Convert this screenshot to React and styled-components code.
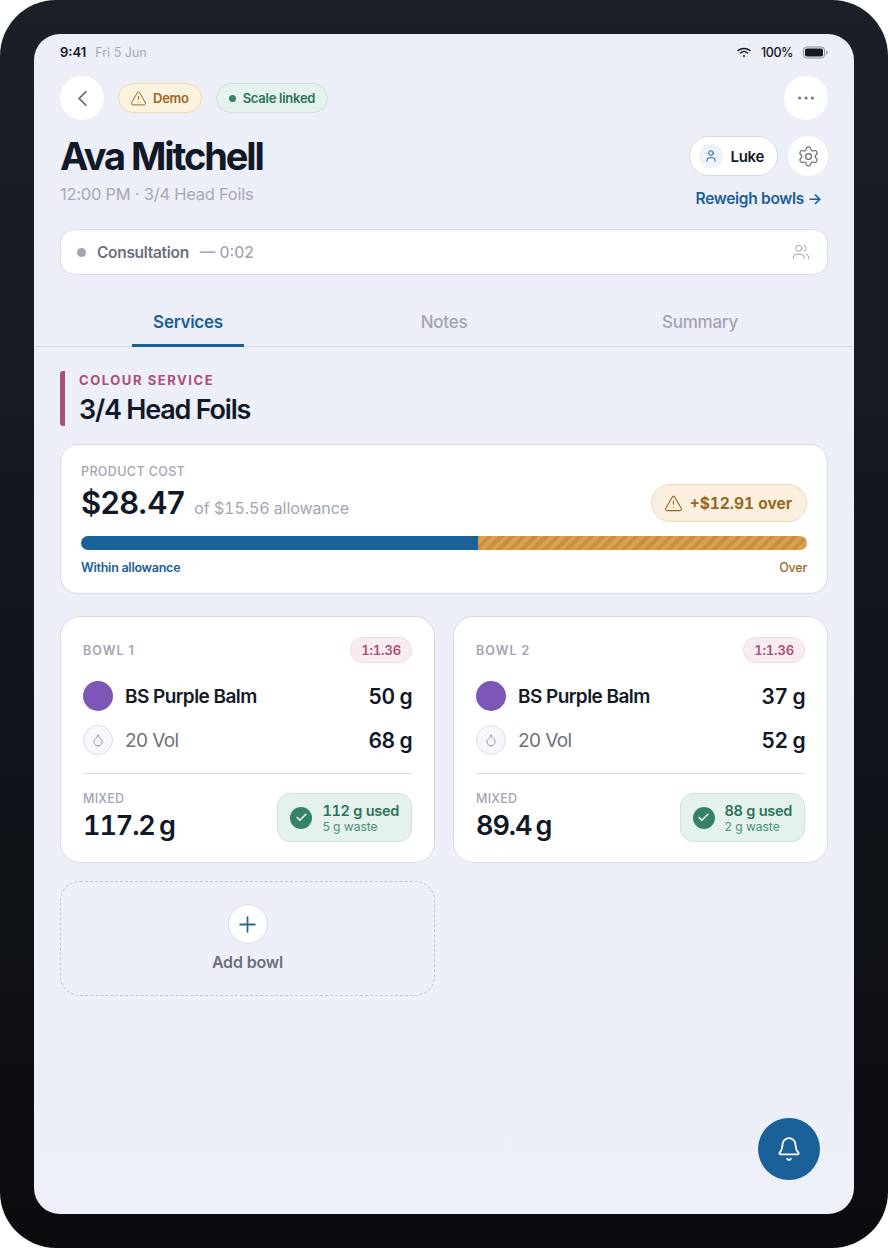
import styled, { createGlobalStyle } from "styled-components";
import { ChevronLeft, TriangleAlert, Ellipsis, User, Settings, Users, Droplet, Check, Plus, Bell } from "lucide-react";

const bowls = [
    { name: "BOWL 1", ratio: "1:1.36", colour: "50 g", dev: "68 g", mixed: "117.2 g", used: "112 g used", waste: "5 g waste" },
    { name: "BOWL 2", ratio: "1:1.36", colour: "37 g", dev: "52 g", mixed: "89.4 g", used: "88 g used", waste: "2 g waste" },
];

function Bowl({ bowl }) {
    return (
        <BowlCard>
            <BowlHead>
                <BowlName>{bowl.name}</BowlName>
                <Ratio>{bowl.ratio}</Ratio>
            </BowlHead>
            <Product>
                <Swatch />
                <ProductName>BS Purple Balm</ProductName>
                <Grams>{bowl.colour}</Grams>
            </Product>
            <Product $dev>
                <DevSwatch><Droplet size={14} strokeWidth={1.5} /></DevSwatch>
                <DevName>20 Vol</DevName>
                <Grams>{bowl.dev}</Grams>
            </Product>
            <BowlFoot>
                <div>
                    <MixedLabel>MIXED</MixedLabel>
                    <MixedValue>{bowl.mixed}</MixedValue>
                </div>
                <UsedBox>
                    <CheckDot><Check size={13} strokeWidth={2.5} /></CheckDot>
                    <div>
                        <UsedText>{bowl.used}</UsedText>
                        <WasteText>{bowl.waste}</WasteText>
                    </div>
                </UsedBox>
            </BowlFoot>
        </BowlCard>
    );
}

export default function App() {
    return (
        <>
            <GlobalStyle />
            <Frame>
                <Screen>
                    <StatusBar>
                        <StatusLeft>
                            <Time>9:41</Time>
                            <DateText>Fri 5 Jun</DateText>
                        </StatusLeft>
                        <StatusRight>
                            <svg width="14" height="11" viewBox="0 0 14 11" fill="none" stroke="#141a26" strokeWidth="1.4" strokeLinecap="round">
                                <path d="M1 3.6C4.4.7 9.6.7 13 3.6" />
                                <path d="M3.4 6C5.5 4.3 8.5 4.3 10.6 6" />
                                <circle cx="7" cy="9" r="1" fill="#141a26" stroke="none" />
                            </svg>
                            <Battery>100%</Battery>
                            <svg width="25" height="13" viewBox="0 0 25 13" fill="none">
                                <rect x="0.5" y="1" width="21" height="11" rx="3" stroke="#8b8f9a" />
                                <rect x="2" y="2.5" width="18" height="8" rx="1.8" fill="#141a26" />
                                <rect x="23" y="4.5" width="1.5" height="4" rx="0.7" fill="#9a9ea8" />
                            </svg>
                        </StatusRight>
                    </StatusBar>

                    <TopBar>
                        <RoundButton><ChevronLeft size={27} strokeWidth={1.5} color="#5d616d" /></RoundButton>
                        <Pill $tone="amber"><TriangleAlert size={17} strokeWidth={1.4} />Demo</Pill>
                        <Pill $tone="green"><GreenDot />Scale linked</Pill>
                        <Spacer />
                        <RoundButton><Ellipsis size={22} strokeWidth={1.4} color="#6b6f7a" /></RoundButton>
                    </TopBar>

                    <Header>
                        <div>
                            <Name>Ava Mitchell</Name>
                            <Sub>12:00 PM · 3/4 Head Foils</Sub>
                        </div>
                        <HeaderRight>
                            <HeaderActions>
                                <StaffPill>
                                    <StaffIcon><User size={14} strokeWidth={1.7} /></StaffIcon>
                                    Luke
                                </StaffPill>
                                <GearButton><Settings size={23} strokeWidth={1.2} color="#62666f" /></GearButton>
                            </HeaderActions>
                            <Reweigh>Reweigh bowls →</Reweigh>
                        </HeaderRight>
                    </Header>

                    <PhaseBar>
                        <PhaseDot />
                        <PhaseName>Consultation</PhaseName>
                        <PhaseTime>— 0:02</PhaseTime>
                        <Spacer />
                        <Users size={18} strokeWidth={1.3} color="#9b9eaa" />
                    </PhaseBar>

                    <Tabs>
                        <Tab $active>Services</Tab>
                        <Tab>Notes</Tab>
                        <Tab>Summary</Tab>
                    </Tabs>

                    <Content>
                        <ServiceHead>
                            <ServiceLabel>COLOUR SERVICE</ServiceLabel>
                            <ServiceTitle>3/4 Head Foils</ServiceTitle>
                        </ServiceHead>

                        <CostCard>
                            <CostTop>
                                <div>
                                    <CostLabel>PRODUCT COST</CostLabel>
                                    <CostLine>
                                        <CostValue>$28.47</CostValue>
                                        <Allowance>of $15.56 allowance</Allowance>
                                    </CostLine>
                                </div>
                                <OverPill><TriangleAlert size={19} strokeWidth={1.4} />+$12.91 over</OverPill>
                            </CostTop>
                            <Meter>
                                <MeterWithin style={{ width: `${(15.56 / 28.47) * 100}%` }} />
                                <MeterOver />
                            </Meter>
                            <MeterLabels>
                                <WithinLabel>Within allowance</WithinLabel>
                                <OverLabel>Over</OverLabel>
                            </MeterLabels>
                        </CostCard>

                        <BowlGrid>
                            {bowls.map((bowl) => <Bowl key={bowl.name} bowl={bowl} />)}
                            <AddBowl>
                                <AddCircle><Plus size={25} strokeWidth={1.7} /></AddCircle>
                                <AddText>Add bowl</AddText>
                            </AddBowl>
                        </BowlGrid>
                    </Content>

                    <Fab><Bell size={26} strokeWidth={1.6} /></Fab>
                </Screen>
            </Frame>
        </>
    );
}

const GlobalStyle = createGlobalStyle`
    html, body {
        margin: 0;
        padding: 0;
        background: #fff;
    }
    * {
        box-sizing: border-box;
    }
    body {
        font-family: Inter, "Liberation Sans", sans-serif;
        color: #141a26;
    }
`;
const Frame = styled.div`
    width: 888px;
    height: 1248px;
    padding: 34px;
    border-radius: 56px;
    background: linear-gradient(180deg, #1b2028 0%, #0a0c10 100%);
`;
const Screen = styled.div`
    position: relative;
    width: 820px;
    height: 1180px;
    border-radius: 26px;
    background: linear-gradient(180deg, #eceef8 0%, #eef0f9 100%);
    overflow: hidden;
`;
const StatusBar = styled.div`
    display: flex;
    justify-content: space-between;
    align-items: center;
    height: 18px;
    margin-top: 9px;
    padding: 0 26px;
`;
const StatusLeft = styled.div`
    display: flex;
    align-items: center;
    gap: 9px;
`;
const Time = styled.span`
    font-size: 13px;
    font-weight: 600;
`;
const DateText = styled.span`
    font-size: 12.5px;
    color: #a5a8b4;
`;
const StatusRight = styled.div`
    display: flex;
    align-items: center;
    gap: 10px;
`;
const Battery = styled.span`
    font-size: 12.5px;
    font-weight: 500;
    letter-spacing: -0.035em;
`;
const TopBar = styled.div`
    display: flex;
    align-items: center;
    margin-top: 15px;
    padding: 0 26px;
`;
const RoundButton = styled.div`
    display: flex;
    align-items: center;
    justify-content: center;
    width: 44px;
    height: 44px;
    border-radius: 50%;
    background: #fff;
`;
const Pill = styled.div`
    display: flex;
    align-items: center;
    gap: ${(p) => (p.$tone === "amber" ? "6px" : "7px")};
    height: 30px;
    margin-left: 14px;
    padding: ${(p) => (p.$tone === "amber" ? "0 12px 0 11px" : "0 12px")};
    border-radius: 15px;
    font-size: 13px;
    font-weight: 600;
    letter-spacing: -0.02em;
    border: 1px solid ${(p) => (p.$tone === "amber" ? "#eedcb4" : "#cfe3da")};
    background: ${(p) => (p.$tone === "amber" ? "#fbf2df" : "#e4f1ec")};
    color: ${(p) => (p.$tone === "amber" ? "#96691f" : "#2c7359")};
`;
const GreenDot = styled.span`
    width: 7px;
    height: 7px;
    border-radius: 50%;
    background: #35826a;
`;
const Spacer = styled.div`
    flex: 1;
`;
const Header = styled.div`
    display: flex;
    justify-content: space-between;
    padding: 0 26px;
    margin-top: 16px;
    height: 93px;
`;
const Name = styled.h1`
    margin: 0;
    font-size: 38px;
    line-height: 40px;
    font-weight: 700;
    letter-spacing: -0.055em;
    color: #111827;
`;
const Sub = styled.div`
    margin-top: 8px;
    font-size: 16.5px;
    line-height: 20px;
    letter-spacing: -0.015em;
    color: #a6a9b5;
`;
const HeaderRight = styled.div`
    display: flex;
    flex-direction: column;
    align-items: flex-end;
`;
const HeaderActions = styled.div`
    display: flex;
    align-items: center;
    gap: 10px;
`;
const StaffPill = styled.div`
    display: flex;
    align-items: center;
    gap: 7px;
    height: 40px;
    padding: 0 13px 0 9px;
    border: 1px solid #d9dbe4;
    border-radius: 20px;
    background: #fff;
    font-size: 15px;
    font-weight: 600;
    letter-spacing: -0.02em;
`;
const StaffIcon = styled.span`
    display: flex;
    align-items: center;
    justify-content: center;
    width: 24px;
    height: 24px;
    border-radius: 50%;
    background: #eef3f8;
    color: #1a6099;
`;
const GearButton = styled(RoundButton)`
    width: 40px;
    height: 40px;
`;
const Reweigh = styled.div`
    margin-top: 13px;
    margin-right: 6px;
    font-size: 15.5px;
    line-height: 20px;
    font-weight: 600;
    letter-spacing: -0.02em;
    color: #1a6099;
`;
const PhaseBar = styled.div`
    display: flex;
    align-items: center;
    height: 46px;
    margin: 0 26px;
    padding: 0 17px 0 16px;
    border: 1px solid #d9dbe4;
    border-radius: 14px;
    background: #fff;
`;
const PhaseDot = styled.span`
    width: 9px;
    height: 9px;
    border-radius: 50%;
    background: #a2a5b1;
`;
const PhaseName = styled.span`
    margin-left: 11px;
    font-size: 15.5px;
    font-weight: 600;
    letter-spacing: -0.02em;
    color: #6c707c;
`;
const PhaseTime = styled.span`
    margin-left: 11px;
    font-size: 15.5px;
    font-weight: 500;
    color: #a2a5b1;
`;
const Tabs = styled.div`
    display: grid;
    grid-template-columns: repeat(3, 1fr);
    margin-top: 25px;
    padding: 0 26px;
    border-bottom: 1px solid #d7d9e3;
`;
const Tab = styled.div`
    position: relative;
    height: 46px;
    padding-top: 11px;
    text-align: center;
    font-size: 17px;
    line-height: 22px;
    letter-spacing: -0.015em;
    font-weight: ${(p) => (p.$active ? 600 : 500)};
    color: ${(p) => (p.$active ? "#1a6099" : "#a2a5b1")};
    &::after {
        content: "";
        display: ${(p) => (p.$active ? "block" : "none")};
        position: absolute;
        left: 72px;
        right: 72px;
        bottom: -1px;
        height: 3px;
        background: #1a6099;
    }
`;
const Content = styled.div`
    padding: 24px 26px 0;
`;
const ServiceHead = styled.div`
    height: 55px;
    padding-left: 14px;
    border-left: 5px solid #a94f78;
    border-radius: 3px;
`;
const ServiceLabel = styled.div`
    font-size: 13px;
    line-height: 18px;
    font-weight: 700;
    letter-spacing: 0.12em;
    color: #a94f78;
`;
const ServiceTitle = styled.div`
    margin-top: 5px;
    font-size: 27px;
    line-height: 32px;
    font-weight: 600;
    letter-spacing: -0.045em;
    color: #111827;
`;
const CostCard = styled.div`
    height: 150px;
    margin-top: 18px;
    padding: 19px 20px 0;
    border: 1px solid #d9dbe4;
    border-radius: 18px;
    background: #fff;
`;
const CostTop = styled.div`
    display: flex;
    justify-content: space-between;
    align-items: flex-end;
`;
const CostLabel = styled.div`
    font-size: 12.5px;
    line-height: 16px;
    font-weight: 500;
    letter-spacing: 0.03em;
    color: #a2a5b1;
`;
const CostLine = styled.div`
    display: flex;
    align-items: baseline;
    gap: 10px;
    margin-top: 4px;
`;
const CostValue = styled.div`
    font-size: 31px;
    line-height: 38px;
    font-weight: 600;
    letter-spacing: -0.02em;
    color: #111827;
`;
const Allowance = styled.div`
    font-size: 16px;
    letter-spacing: -0.005em;
    font-variant-numeric: tabular-nums;
    color: #a2a5b1;
`;
const OverPill = styled.div`
    display: flex;
    align-items: center;
    gap: 7px;
    height: 38px;
    padding: 0 14px 0 12px;
    border: 1px solid #efd9b8;
    border-radius: 19px;
    background: #fbefe0;
    font-size: 15.5px;
    font-weight: 700;
    font-variant-numeric: tabular-nums;
    color: #96691f;
`;
const Meter = styled.div`
    display: flex;
    height: 14px;
    margin-top: 14px;
    border-radius: 7px;
    overflow: hidden;
`;
const MeterWithin = styled.div`
    background: #1a6099;
`;
const MeterOver = styled.div`
    flex: 1;
    background: repeating-linear-gradient(
        -45deg,
        #c9903e 0,
        #c9903e 4px,
        #d8a04f 4px,
        #d8a04f 8px
    );
`;
const MeterLabels = styled.div`
    display: flex;
    justify-content: space-between;
    margin-top: 10px;
    font-size: 12.5px;
    line-height: 16px;
    font-weight: 600;
    letter-spacing: -0.02em;
`;
const WithinLabel = styled.span`
    color: #1a6099;
`;
const OverLabel = styled.span`
    color: #96691f;
    font-weight: 500;
`;
const BowlGrid = styled.div`
    display: grid;
    grid-template-columns: 375px 375px;
    gap: 18px;
    margin-top: 22px;
`;
const BowlCard = styled.div`
    height: 247px;
    padding: 20px 22px 0;
    border: 1px solid #d9dbe4;
    border-radius: 20px;
    background: #fff;
`;
const BowlHead = styled.div`
    display: flex;
    justify-content: space-between;
    align-items: center;
    height: 26px;
`;
const BowlName = styled.div`
    font-size: 12.5px;
    font-weight: 600;
    letter-spacing: 0.08em;
    color: #a2a5b1;
`;
const Ratio = styled.div`
    display: flex;
    align-items: center;
    height: 26px;
    padding: 0 10px;
    border: 1px solid #f0d9e3;
    border-radius: 13px;
    background: #f9ecf1;
    font-size: 13px;
    font-weight: 600;
    letter-spacing: -0.01em;
    font-variant-numeric: tabular-nums;
    color: #a94f78;
`;
const Product = styled.div`
    display: flex;
    align-items: center;
    gap: 12px;
    height: 30px;
    margin-top: ${(p) => (p.$dev ? "14px" : "18px")};
`;
const Swatch = styled.div`
    flex: none;
    width: 30px;
    height: 30px;
    border-radius: 50%;
    background: #7d57b8;
`;
const DevSwatch = styled.div`
    flex: none;
    display: flex;
    align-items: center;
    justify-content: center;
    width: 30px;
    height: 30px;
    border: 1px solid #dcdee6;
    border-radius: 50%;
    background: #f6f7fa;
    color: #888c98;
`;
const ProductName = styled.div`
    flex: 1;
    font-size: 19px;
    font-weight: 600;
    letter-spacing: -0.03em;
    color: #141a26;
`;
const DevName = styled.div`
    flex: 1;
    font-size: 19px;
    letter-spacing: -0.03em;
    color: #6c707c;
`;
const Grams = styled.div`
    font-size: 21px;
    font-weight: 600;
    letter-spacing: -0.03em;
    font-variant-numeric: tabular-nums;
    color: #111827;
`;
const BowlFoot = styled.div`
    display: flex;
    justify-content: space-between;
    align-items: center;
    margin-top: 18px;
    padding-top: 19px;
    border-top: 1px solid #dddfe7;
`;
const MixedLabel = styled.div`
    font-size: 12.5px;
    line-height: 10px;
    font-weight: 500;
    letter-spacing: 0.02em;
    color: #a2a5b1;
`;
const MixedValue = styled.div`
    margin-top: 6px;
    font-size: 27px;
    line-height: 32px;
    font-weight: 600;
    letter-spacing: -0.04em;
    word-spacing: -2px;
    font-variant-numeric: tabular-nums;
    color: #111827;
`;
const UsedBox = styled.div`
    display: flex;
    align-items: center;
    gap: 10px;
    height: 49px;
    padding: 0 12px;
    border: 1px solid #cfe3da;
    border-radius: 13px;
    background: #e4f1ec;
`;
const CheckDot = styled.span`
    display: flex;
    align-items: center;
    justify-content: center;
    width: 22px;
    height: 22px;
    border-radius: 50%;
    background: #35826a;
    color: #fff;
`;
const UsedText = styled.div`
    font-size: 14.5px;
    line-height: 17px;
    font-weight: 600;
    letter-spacing: -0.02em;
    font-variant-numeric: tabular-nums;
    color: #2c7359;
`;
const WasteText = styled.div`
    font-size: 12px;
    line-height: 15px;
    color: #46917a;
`;
const AddBowl = styled.div`
    display: flex;
    flex-direction: column;
    align-items: center;
    height: 115px;
    padding-top: 22px;
    border: 1px dashed #c4c6d0;
    border-radius: 20px;
`;
const AddCircle = styled.div`
    display: flex;
    align-items: center;
    justify-content: center;
    width: 40px;
    height: 40px;
    border: 1px solid #d9dbe4;
    border-radius: 50%;
    background: #fff;
    color: #2d6791;
`;
const AddText = styled.div`
    margin-top: 8px;
    font-size: 16px;
    line-height: 20px;
    font-weight: 600;
    letter-spacing: -0.01em;
    color: #6c707c;
`;
const Fab = styled.div`
    position: absolute;
    right: 34px;
    bottom: 34px;
    display: flex;
    align-items: center;
    justify-content: center;
    width: 62px;
    height: 62px;
    border-radius: 50%;
    background: #1a6099;
    color: #fff;
`;
